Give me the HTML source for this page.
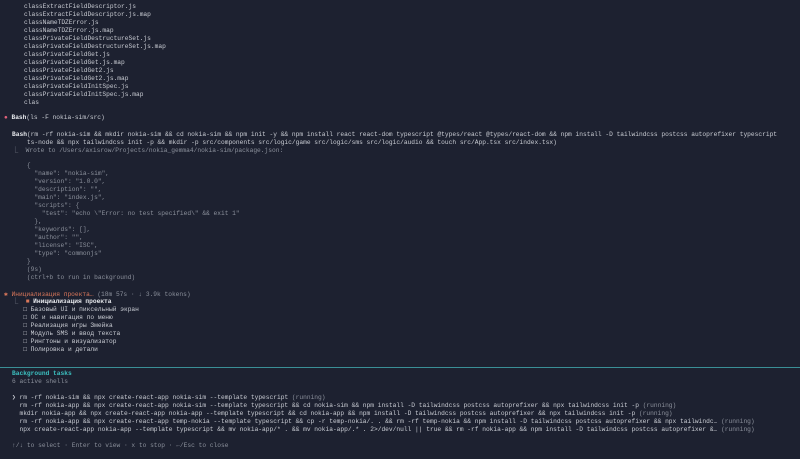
<!DOCTYPE html>
<html><head><meta charset="utf-8"><style>
body{margin:0;width:800px;height:459px;background:#1d2130;overflow:hidden;position:relative;font-family:"Liberation Mono","DejaVu Sans Mono","Noto Sans CJK SC",monospace;font-size:6.23px;color:#c9ccd3}
.l{position:absolute;white-space:pre;line-height:8px}
.g{color:#8b909b}.o{color:#d9775a}.t{color:#3cc0c0;font-weight:bold}.b{font-weight:bold;color:#e8eaee}
.hr{position:absolute;left:0;top:367px;width:800px;height:1px;background:#3a8f96}
</style></head><body>
<div class="l" style="left:24px;top:3px">classExtractFieldDescriptor.js</div>
<div class="l" style="left:24px;top:11px">classExtractFieldDescriptor.js.map</div>
<div class="l" style="left:24px;top:19px">classNameTDZError.js</div>
<div class="l" style="left:24px;top:27px">classNameTDZError.js.map</div>
<div class="l" style="left:24px;top:35px">classPrivateFieldDestructureSet.js</div>
<div class="l" style="left:24px;top:43px">classPrivateFieldDestructureSet.js.map</div>
<div class="l" style="left:24px;top:51px">classPrivateFieldGet.js</div>
<div class="l" style="left:24px;top:59px">classPrivateFieldGet.js.map</div>
<div class="l" style="left:24px;top:67px">classPrivateFieldGet2.js</div>
<div class="l" style="left:24px;top:75px">classPrivateFieldGet2.js.map</div>
<div class="l" style="left:24px;top:83px">classPrivateFieldInitSpec.js</div>
<div class="l" style="left:24px;top:91px">classPrivateFieldInitSpec.js.map</div>
<div class="l" style="left:24px;top:99px">clas</div>
<div class="l" style="left:4px;top:114px"><span style="color:#e0607a">●</span> <span class="b">Bash</span>(ls -F nokia-sim/src)</div>
<div class="l" style="left:12px;top:131px"><span class="b">Bash</span>(rm -rf nokia-sim &amp;&amp; mkdir nokia-sim &amp;&amp; cd nokia-sim &amp;&amp; npm init -y &amp;&amp; npm install react react-dom typescript @types/react @types/react-dom &amp;&amp; npm install -D tailwindcss postcss autoprefixer typescript</div>
<div class="l" style="left:12px;top:139px">    ts-node &amp;&amp; npx tailwindcss init -p &amp;&amp; mkdir -p src/components src/logic/game src/logic/sms src/logic/audio &amp;&amp; touch src/App.tsx src/index.tsx)</div>
<div class="l g" style="left:12px;top:147px">⎿  Wrote to /Users/axisrow/Projects/nokia_gemma4/nokia-sim/package.json:</div>
<div class="l g" style="left:12px;top:162px">    {
      "name": "nokia-sim",
      "version": "1.0.0",
      "description": "",
      "main": "index.js",
      "scripts": {
        "test": "echo \"Error: no test specified\" &amp;&amp; exit 1"
      },
      "keywords": [],
      "author": "",
      "license": "ISC",
      "type": "commonjs"
    }
    (9s)
    (ctrl+b to run in background)</div>
<div class="l o" style="left:4px;top:291px">✱ Инициализация проекта… <span class="g">(18m 57s · ↓ 3.9k tokens)</span></div>
<div class="l" style="left:12px;top:298px"><span class="g">⎿</span>  <span class="o">■</span> <span class="b">Инициализация проекта</span></div>
<div class="l" style="left:12px;top:306px">   □ Базовый UI и пиксельный экран</div>
<div class="l" style="left:12px;top:314px">   □ ОС и навигация по меню</div>
<div class="l" style="left:12px;top:322px">   □ Реализация игры Змейка</div>
<div class="l" style="left:12px;top:330px">   □ Модуль SMS и ввод текста</div>
<div class="l" style="left:12px;top:338px">   □ Рингтоны и визуализатор</div>
<div class="l" style="left:12px;top:346px">   □ Полировка и детали</div>
<div class="hr"></div>
<div class="l t" style="left:12px;top:370px">Background tasks</div>
<div class="l g" style="left:12px;top:378px">6 active shells</div>
<div class="l" style="left:12px;top:394px">❯ rm -rf nokia-sim &amp;&amp; npx create-react-app nokia-sim --template typescript <span class="g">(running)</span></div>
<div class="l" style="left:12px;top:402px">  rm -rf nokia-app &amp;&amp; npx create-react-app nokia-sim --template typescript &amp;&amp; cd nokia-sim &amp;&amp; npm install -D tailwindcss postcss autoprefixer &amp;&amp; npx tailwindcss init -p <span class="g">(running)</span></div>
<div class="l" style="left:12px;top:410px">  mkdir nokia-app &amp;&amp; npx create-react-app nokia-app --template typescript &amp;&amp; cd nokia-app &amp;&amp; npm install -D tailwindcss postcss autoprefixer &amp;&amp; npx tailwindcss init -p <span class="g">(running)</span></div>
<div class="l" style="left:12px;top:418px">  rm -rf nokia-app &amp;&amp; npx create-react-app temp-nokia --template typescript &amp;&amp; cp -r temp-nokia/. . &amp;&amp; rm -rf temp-nokia &amp;&amp; npm install -D tailwindcss postcss autoprefixer &amp;&amp; npx tailwindc… <span class="g">(running)</span></div>
<div class="l" style="left:12px;top:426px">  npx create-react-app nokia-app --template typescript &amp;&amp; mv nokia-app/* . &amp;&amp; mv nokia-app/.* . 2&gt;/dev/null || true &amp;&amp; rm -rf nokia-app &amp;&amp; npm install -D tailwindcss postcss autoprefixer &… <span class="g">(running)</span></div>
<div class="l g" style="left:12px;top:442px">↑/↓ to select · Enter to view · x to stop · ←/Esc to close</div>
</body></html>
